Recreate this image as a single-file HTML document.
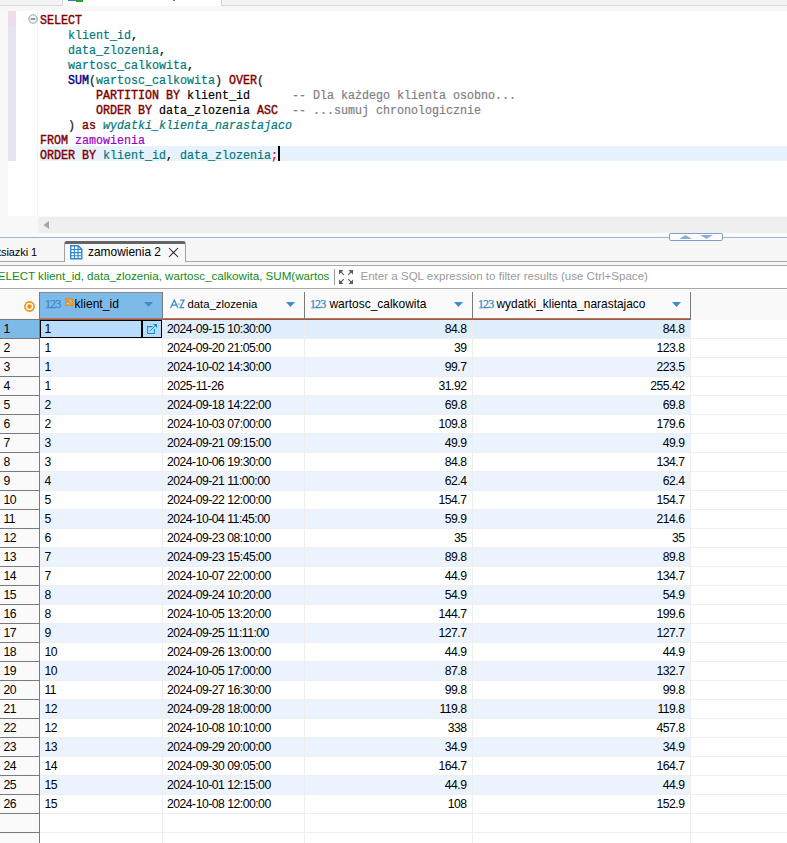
<!DOCTYPE html><html><head><meta charset="utf-8"><style>
*{margin:0;padding:0;box-sizing:border-box}
html,body{width:787px;height:843px;overflow:hidden;background:#fff;position:relative;font-family:"Liberation Sans",sans-serif}
.a{position:absolute}
.code{font-family:"Liberation Mono",monospace;font-size:12px;line-height:15px;transform:scaleX(0.9722);transform-origin:0 0;-webkit-text-stroke-width:0.2px;white-space:pre;color:#000}
.kw{color:#800000;font-weight:normal;-webkit-text-stroke-width:0.4px}
.fn{color:#000080;font-weight:normal;-webkit-text-stroke-width:0.4px}
.col{color:#007878}
.par{color:#141414}
.cm{color:#808080}
.al{color:#007878;font-style:italic}
.tb{color:#9a00c8}
.semi{color:#ff0000}
.caret{display:inline-block;width:1px;height:14px;background:#000;vertical-align:-3px}
.ui{font-size:12px;white-space:pre;line-height:19px}
.num{letter-spacing:-0.45px}
</style></head><body><div class="a" style="left:0;top:0;width:787px;height:6px;background:#f3f3f3;border-bottom:1px solid #dadada"></div>
<div class="a" style="left:62px;top:0;width:160px;height:6px;background:#fff;border-left:1px solid #d6d6d6;border-right:1px solid #d6d6d6"></div>
<div class="a" style="left:68px;top:0;width:8px;height:1px;background:#2f7fd0"></div><div class="a" style="left:76px;top:0;width:7px;height:2px;background:#2ea02e"></div>
<div class="a" style="left:173px;top:0;width:2px;height:1px;background:#8a7060"></div>
<div class="a" style="left:0;top:6px;width:787px;height:5px;background:#f7f7f7"></div>
<div class="a" style="left:0;top:11px;width:8px;height:206px;background:#f8f8f8"></div>
<div class="a" style="left:0;top:216px;width:787px;height:17px;background:#f8f8f8"></div>
<div class="a" style="left:8px;top:11px;width:8px;height:15px;background:#ecdcec"></div>
<div class="a" style="left:8px;top:26px;width:8px;height:135px;background:#e6e4f2"></div>
<div class="a" style="left:37px;top:11px;width:1px;height:205px;background:#f2f2f2"></div>
<svg class="a" style="left:27.5px;top:13.5px" width="10" height="10"><circle cx="5" cy="5" r="4.2" fill="#f4f6fa" stroke="#8a9ab8" stroke-width="1"/><line x1="2.7" y1="5" x2="7.3" y2="5" stroke="#4a5a78" stroke-width="1.2"/></svg>
<div class="a" style="left:40px;top:146px;width:747px;height:15px;background:#e8f2fe"></div>
<div class="a code" style="left:40px;top:13.5px"><b class="kw">SELECT</b>
    <span class="col">klient_id</span>,
    <span class="col">data_zlozenia</span>,
    <span class="col">wartosc_calkowita</span>,
    <b class="fn">SUM</b><span class="par">(</span><span class="col">wartosc_calkowita</span><span class="par">)</span> <b class="kw">OVER</b><span class="par">(</span>
        <b class="kw">PARTITION BY</b> klient_id      <span class="cm">-- Dla każdego klienta osobno...</span>
        <b class="kw">ORDER BY</b> data_zlozenia <b class="kw">ASC</b>  <span class="cm">-- ...sumuj chronologicznie</span>
    <span class="par">)</span> <b class="kw">as</b> <i class="al">wydatki_klienta_narastajaco</i>
<b class="kw">FROM</b> <span class="tb">zamowienia</span>
<b class="kw">ORDER BY</b> <span class="col">klient_id</span>, <span class="col">data_zlozenia</span><span class="semi">;</span></div>
<div class="a" style="left:278px;top:146px;width:2px;height:15px;background:#000"></div>
<div class="a" style="left:38px;top:217px;width:749px;height:16px;background:#efefef"></div>
<svg class="a" style="left:42px;top:220px" width="9" height="10"><path d="M7 1 L1.5 5 L7 9 Z" fill="#a6a6a6"/></svg>
<div class="a" style="left:0;top:233px;width:787px;height:4px;background:#fafafa"></div>
<div class="a" style="left:0;top:237px;width:787px;height:1px;background:#9fb6d2"></div>
<div class="a" style="left:0;top:238px;width:787px;height:28px;background:#f7f7f7"></div>
<div class="a" style="left:669px;top:233px;width:54px;height:8px;background:#fff;border:1px solid #7f9fc6;border-radius:2px"></div>
<svg class="a" style="left:678px;top:234px" width="40" height="6"><path d="M1 5 L7.5 1 L14 5 Z" fill="#8fadd2"/><path d="M22 1 L35 1 L28.5 5 Z" fill="#8fadd2"/></svg>
<div class="a" style="left:0;top:261px;width:787px;height:1px;background:#a8a8a8"></div>
<div class="a" style="left:-2px;top:245.95px;font-size:11.1px;line-height:normal;white-space:pre;color:#000;letter-spacing:-0.1px;">tsiazki 1</div>
<div class="a" style="left:64px;top:241px;width:122px;height:21px;background:#f9f9f9;border-left:1px solid #a0a0a0;border-right:1px solid #a0a0a0;border-top:3px solid #646464;border-radius:3px 3px 0 0"></div>
<svg class="a" style="left:70px;top:245px" width="13" height="15"><path d="M0.7 0.7H8.2L11.8 4.3V13.8H0.7Z" fill="#fff" stroke="#2f86d2" stroke-width="1.4"/><path d="M4.4 1V13.5M8 1V13.5M1 4.5H11.5M1 7.6H11.5M1 10.7H11.5M8.2 0.7V4.3H11.8" fill="none" stroke="#2f86d2" stroke-width="1.1"/></svg>
<div class="a" style="left:88px;top:244.69px;font-size:11.95px;line-height:normal;white-space:pre;color:#000;">zamowienia 2</div>
<svg class="a" style="left:168px;top:247px" width="11" height="11"><path d="M1 1L10 10M10 1L1 10" stroke="#1a1a1a" stroke-width="1.05"/></svg>
<div class="a" style="left:0;top:265px;width:787px;height:24px;background:#fff;border-top:1px solid #a8a8a8;border-bottom:1px solid #a8a8a8"></div>
<div class="a" style="left:0;top:266px;width:331px;height:22px;overflow:hidden"><div class="a" style="left:-10px;top:3.30px;font-size:11.6px;line-height:normal;white-space:pre;color:#148a14;">SELECT klient_id, data_zlozenia, wartosc_calkowita, SUM(wartos</div></div>
<div class="a" style="left:334px;top:269px;width:1px;height:16px;background:#9a9a9a"></div>
<svg class="a" style="left:339px;top:270px" width="15" height="14"><path d="M0 0H4.5L0 4.5ZM14 0H9.5L14 4.5ZM0 14H4.5L0 9.5ZM14 14H9.5L14 9.5Z" fill="#5a5a5a"/><path d="M1 1L4.8 4.8M13 1L9.2 4.8M1 13L4.8 9.2M13 13L9.2 9.2" stroke="#5a5a5a" stroke-width="1.1"/></svg>
<div class="a" style="left:360.5px;top:269.55px;font-size:11.55px;line-height:normal;white-space:pre;color:#9a9a9a;">Enter a SQL expression to filter results (use Ctrl+Space)</div>
<div class="a" style="left:0;top:289px;width:787px;height:554px;background:#fff"></div>
<div class="a" style="left:0;top:289px;width:787px;height:31px;background:#f9f9f9"></div>
<div class="a" style="left:0;top:292px;width:691px;height:28px;background:#fafafa"></div>
<div class="a" style="left:39px;top:292px;width:124px;height:1px;background:#8a8a8a"></div>
<div class="a" style="left:0;top:319px;width:40px;height:1px;background:#7a7a7a"></div>
<div class="a" style="left:40px;top:293px;width:122px;height:25px;background:#7dbae7"></div>
<div class="a" style="left:40px;top:318px;width:651px;height:1px;background:#f0643c"></div>
<div class="a" style="left:40px;top:319px;width:651px;height:1px;background:#6a6a6a"></div>
<div class="a" style="left:39px;top:292px;width:1px;height:28px;background:#7a7a7a"></div>
<div class="a" style="left:162px;top:292px;width:1px;height:28px;background:#7a7a7a"></div>
<div class="a" style="left:304px;top:292px;width:1px;height:28px;background:#7a7a7a"></div>
<div class="a" style="left:472px;top:292px;width:1px;height:28px;background:#7a7a7a"></div>
<div class="a" style="left:690px;top:292px;width:1px;height:28px;background:#7a7a7a"></div>
<svg class="a" style="left:21.5px;top:298.5px" width="15" height="15"><circle cx="7.5" cy="7.5" r="4.6" fill="none" stroke="#f5900a" stroke-width="1.6"/><circle cx="7.5" cy="7.5" r="2.3" fill="#f5900a"/></svg>
<div class="a" style="left:45px;top:297.14px;font-size:12px;line-height:normal;white-space:pre;color:#3a86c8;letter-spacing:-0.9px;font-family:'Liberation Serif',serif;-webkit-text-stroke:0.25px #3a86c8">123</div>
<svg class="a" style="left:65px;top:298px" width="8" height="8"><rect x="0.75" y="0.75" width="6.5" height="6.5" fill="#9cc8f0" stroke="#f68c0c" stroke-width="1.5"/><path d="M2.2 2.2L5.5 5.5M2.2 2.2H4.8M2.2 2.2V4.8" stroke="#f68c0c" stroke-width="1.3"/></svg>
<div class="a" style="left:74.5px;top:297.15px;font-size:12.1px;line-height:normal;white-space:pre;color:#000;">klient_id</div>
<svg class="a" style="left:144px;top:302px" width="10" height="6"><path d="M0 0H9L4.5 5Z" fill="#3d8bd0"/></svg>
<svg class="a" style="left:169px;top:299px" width="17" height="10"><path d="M1.6 9L5.3 1L9 9M2.9 6.2H7.7M11.2 1.2H15L11.2 8.6H15.2" fill="none" stroke="#3d8bd0" stroke-width="1.25"/><rect x="9.4" y="4.4" width="1.3" height="1.3" fill="#3d8bd0"/></svg>
<div class="a" style="left:187.5px;top:297.87px;font-size:11.3px;line-height:normal;white-space:pre;color:#000;">data_zlozenia</div>
<svg class="a" style="left:286px;top:302px" width="10" height="6"><path d="M0 0H9L4.5 5Z" fill="#3d8bd0"/></svg>
<div class="a" style="left:310px;top:297.14px;font-size:12px;line-height:normal;white-space:pre;color:#3a86c8;letter-spacing:-0.9px;font-family:'Liberation Serif',serif;-webkit-text-stroke:0.25px #3a86c8">123</div>
<div class="a" style="left:329.5px;top:297.29px;font-size:11.95px;line-height:normal;white-space:pre;color:#000;">wartosc_calkowita</div>
<svg class="a" style="left:454px;top:302px" width="10" height="6"><path d="M0 0H9L4.5 5Z" fill="#3d8bd0"/></svg>
<div class="a" style="left:478px;top:297.14px;font-size:12px;line-height:normal;white-space:pre;color:#3a86c8;letter-spacing:-0.9px;font-family:'Liberation Serif',serif;-webkit-text-stroke:0.25px #3a86c8">123</div>
<div class="a" style="left:496.5px;top:297.31px;font-size:11.92px;line-height:normal;white-space:pre;color:#000;">wydatki_klienta_narastajaco</div>
<svg class="a" style="left:672px;top:302px" width="10" height="6"><path d="M0 0H9L4.5 5Z" fill="#3d8bd0"/></svg>
<div class="a" style="left:40px;top:320px;width:650px;height:18px;background:#e1eefc"></div>
<div class="a" style="left:40px;top:338px;width:747px;height:1px;background:#efefef"></div>
<div class="a" style="left:0;top:320px;width:39px;height:18px;background:#7dbae7"></div>
<div class="a" style="left:0;top:338px;width:39px;height:1px;background:#7a7a7a"></div>
<div class="a" style="left:167px;top:321.96px;font-size:12.2px;line-height:normal;white-space:pre;color:#000;letter-spacing:-0.5px;">2024-09-15 10:30:00</div>
<div class="a" style="right:320.5px;top:321.96px;font-size:12.2px;line-height:normal;white-space:pre;color:#000;letter-spacing:-0.5px;">84.8</div>
<div class="a" style="right:102.5px;top:321.96px;font-size:12.2px;line-height:normal;white-space:pre;color:#000;letter-spacing:-0.5px;">84.8</div>
<div class="a" style="left:40px;top:357px;width:747px;height:1px;background:#efefef"></div>
<div class="a" style="left:0;top:339px;width:39px;height:18px;background:#fafafa"></div>
<div class="a" style="left:0;top:357px;width:39px;height:1px;background:#7a7a7a"></div>
<div class="a" style="left:3.5px;top:340.96px;font-size:12.2px;line-height:normal;white-space:pre;color:#000;letter-spacing:-0.5px;">2</div>
<div class="a" style="left:44.5px;top:340.96px;font-size:12.2px;line-height:normal;white-space:pre;color:#000;letter-spacing:-0.5px;">1</div>
<div class="a" style="left:167px;top:340.96px;font-size:12.2px;line-height:normal;white-space:pre;color:#000;letter-spacing:-0.5px;">2024-09-20 21:05:00</div>
<div class="a" style="right:320.5px;top:340.96px;font-size:12.2px;line-height:normal;white-space:pre;color:#000;letter-spacing:-0.5px;">39</div>
<div class="a" style="right:102.5px;top:340.96px;font-size:12.2px;line-height:normal;white-space:pre;color:#000;letter-spacing:-0.5px;">123.8</div>
<div class="a" style="left:40px;top:358px;width:650px;height:18px;background:#ebf4fe"></div>
<div class="a" style="left:40px;top:376px;width:747px;height:1px;background:#efefef"></div>
<div class="a" style="left:0;top:358px;width:39px;height:18px;background:#fafafa"></div>
<div class="a" style="left:0;top:376px;width:39px;height:1px;background:#7a7a7a"></div>
<div class="a" style="left:3.5px;top:359.96px;font-size:12.2px;line-height:normal;white-space:pre;color:#000;letter-spacing:-0.5px;">3</div>
<div class="a" style="left:44.5px;top:359.96px;font-size:12.2px;line-height:normal;white-space:pre;color:#000;letter-spacing:-0.5px;">1</div>
<div class="a" style="left:167px;top:359.96px;font-size:12.2px;line-height:normal;white-space:pre;color:#000;letter-spacing:-0.5px;">2024-10-02 14:30:00</div>
<div class="a" style="right:320.5px;top:359.96px;font-size:12.2px;line-height:normal;white-space:pre;color:#000;letter-spacing:-0.5px;">99.7</div>
<div class="a" style="right:102.5px;top:359.96px;font-size:12.2px;line-height:normal;white-space:pre;color:#000;letter-spacing:-0.5px;">223.5</div>
<div class="a" style="left:40px;top:395px;width:747px;height:1px;background:#efefef"></div>
<div class="a" style="left:0;top:377px;width:39px;height:18px;background:#fafafa"></div>
<div class="a" style="left:0;top:395px;width:39px;height:1px;background:#7a7a7a"></div>
<div class="a" style="left:3.5px;top:378.96px;font-size:12.2px;line-height:normal;white-space:pre;color:#000;letter-spacing:-0.5px;">4</div>
<div class="a" style="left:44.5px;top:378.96px;font-size:12.2px;line-height:normal;white-space:pre;color:#000;letter-spacing:-0.5px;">1</div>
<div class="a" style="left:167px;top:378.96px;font-size:12.2px;line-height:normal;white-space:pre;color:#000;letter-spacing:-0.5px;">2025-11-26</div>
<div class="a" style="right:320.5px;top:378.96px;font-size:12.2px;line-height:normal;white-space:pre;color:#000;letter-spacing:-0.5px;">31.92</div>
<div class="a" style="right:102.5px;top:378.96px;font-size:12.2px;line-height:normal;white-space:pre;color:#000;letter-spacing:-0.5px;">255.42</div>
<div class="a" style="left:40px;top:396px;width:650px;height:18px;background:#ebf4fe"></div>
<div class="a" style="left:40px;top:414px;width:747px;height:1px;background:#efefef"></div>
<div class="a" style="left:0;top:396px;width:39px;height:18px;background:#fafafa"></div>
<div class="a" style="left:0;top:414px;width:39px;height:1px;background:#7a7a7a"></div>
<div class="a" style="left:3.5px;top:397.96px;font-size:12.2px;line-height:normal;white-space:pre;color:#000;letter-spacing:-0.5px;">5</div>
<div class="a" style="left:44.5px;top:397.96px;font-size:12.2px;line-height:normal;white-space:pre;color:#000;letter-spacing:-0.5px;">2</div>
<div class="a" style="left:167px;top:397.96px;font-size:12.2px;line-height:normal;white-space:pre;color:#000;letter-spacing:-0.5px;">2024-09-18 14:22:00</div>
<div class="a" style="right:320.5px;top:397.96px;font-size:12.2px;line-height:normal;white-space:pre;color:#000;letter-spacing:-0.5px;">69.8</div>
<div class="a" style="right:102.5px;top:397.96px;font-size:12.2px;line-height:normal;white-space:pre;color:#000;letter-spacing:-0.5px;">69.8</div>
<div class="a" style="left:40px;top:433px;width:747px;height:1px;background:#efefef"></div>
<div class="a" style="left:0;top:415px;width:39px;height:18px;background:#fafafa"></div>
<div class="a" style="left:0;top:433px;width:39px;height:1px;background:#7a7a7a"></div>
<div class="a" style="left:3.5px;top:416.96px;font-size:12.2px;line-height:normal;white-space:pre;color:#000;letter-spacing:-0.5px;">6</div>
<div class="a" style="left:44.5px;top:416.96px;font-size:12.2px;line-height:normal;white-space:pre;color:#000;letter-spacing:-0.5px;">2</div>
<div class="a" style="left:167px;top:416.96px;font-size:12.2px;line-height:normal;white-space:pre;color:#000;letter-spacing:-0.5px;">2024-10-03 07:00:00</div>
<div class="a" style="right:320.5px;top:416.96px;font-size:12.2px;line-height:normal;white-space:pre;color:#000;letter-spacing:-0.5px;">109.8</div>
<div class="a" style="right:102.5px;top:416.96px;font-size:12.2px;line-height:normal;white-space:pre;color:#000;letter-spacing:-0.5px;">179.6</div>
<div class="a" style="left:40px;top:434px;width:650px;height:18px;background:#ebf4fe"></div>
<div class="a" style="left:40px;top:452px;width:747px;height:1px;background:#efefef"></div>
<div class="a" style="left:0;top:434px;width:39px;height:18px;background:#fafafa"></div>
<div class="a" style="left:0;top:452px;width:39px;height:1px;background:#7a7a7a"></div>
<div class="a" style="left:3.5px;top:435.96px;font-size:12.2px;line-height:normal;white-space:pre;color:#000;letter-spacing:-0.5px;">7</div>
<div class="a" style="left:44.5px;top:435.96px;font-size:12.2px;line-height:normal;white-space:pre;color:#000;letter-spacing:-0.5px;">3</div>
<div class="a" style="left:167px;top:435.96px;font-size:12.2px;line-height:normal;white-space:pre;color:#000;letter-spacing:-0.5px;">2024-09-21 09:15:00</div>
<div class="a" style="right:320.5px;top:435.96px;font-size:12.2px;line-height:normal;white-space:pre;color:#000;letter-spacing:-0.5px;">49.9</div>
<div class="a" style="right:102.5px;top:435.96px;font-size:12.2px;line-height:normal;white-space:pre;color:#000;letter-spacing:-0.5px;">49.9</div>
<div class="a" style="left:40px;top:471px;width:747px;height:1px;background:#efefef"></div>
<div class="a" style="left:0;top:453px;width:39px;height:18px;background:#fafafa"></div>
<div class="a" style="left:0;top:471px;width:39px;height:1px;background:#7a7a7a"></div>
<div class="a" style="left:3.5px;top:454.96px;font-size:12.2px;line-height:normal;white-space:pre;color:#000;letter-spacing:-0.5px;">8</div>
<div class="a" style="left:44.5px;top:454.96px;font-size:12.2px;line-height:normal;white-space:pre;color:#000;letter-spacing:-0.5px;">3</div>
<div class="a" style="left:167px;top:454.96px;font-size:12.2px;line-height:normal;white-space:pre;color:#000;letter-spacing:-0.5px;">2024-10-06 19:30:00</div>
<div class="a" style="right:320.5px;top:454.96px;font-size:12.2px;line-height:normal;white-space:pre;color:#000;letter-spacing:-0.5px;">84.8</div>
<div class="a" style="right:102.5px;top:454.96px;font-size:12.2px;line-height:normal;white-space:pre;color:#000;letter-spacing:-0.5px;">134.7</div>
<div class="a" style="left:40px;top:472px;width:650px;height:18px;background:#ebf4fe"></div>
<div class="a" style="left:40px;top:490px;width:747px;height:1px;background:#efefef"></div>
<div class="a" style="left:0;top:472px;width:39px;height:18px;background:#fafafa"></div>
<div class="a" style="left:0;top:490px;width:39px;height:1px;background:#7a7a7a"></div>
<div class="a" style="left:3.5px;top:473.96px;font-size:12.2px;line-height:normal;white-space:pre;color:#000;letter-spacing:-0.5px;">9</div>
<div class="a" style="left:44.5px;top:473.96px;font-size:12.2px;line-height:normal;white-space:pre;color:#000;letter-spacing:-0.5px;">4</div>
<div class="a" style="left:167px;top:473.96px;font-size:12.2px;line-height:normal;white-space:pre;color:#000;letter-spacing:-0.5px;">2024-09-21 11:00:00</div>
<div class="a" style="right:320.5px;top:473.96px;font-size:12.2px;line-height:normal;white-space:pre;color:#000;letter-spacing:-0.5px;">62.4</div>
<div class="a" style="right:102.5px;top:473.96px;font-size:12.2px;line-height:normal;white-space:pre;color:#000;letter-spacing:-0.5px;">62.4</div>
<div class="a" style="left:40px;top:509px;width:747px;height:1px;background:#efefef"></div>
<div class="a" style="left:0;top:491px;width:39px;height:18px;background:#fafafa"></div>
<div class="a" style="left:0;top:509px;width:39px;height:1px;background:#7a7a7a"></div>
<div class="a" style="left:3.5px;top:492.96px;font-size:12.2px;line-height:normal;white-space:pre;color:#000;letter-spacing:-0.5px;">10</div>
<div class="a" style="left:44.5px;top:492.96px;font-size:12.2px;line-height:normal;white-space:pre;color:#000;letter-spacing:-0.5px;">5</div>
<div class="a" style="left:167px;top:492.96px;font-size:12.2px;line-height:normal;white-space:pre;color:#000;letter-spacing:-0.5px;">2024-09-22 12:00:00</div>
<div class="a" style="right:320.5px;top:492.96px;font-size:12.2px;line-height:normal;white-space:pre;color:#000;letter-spacing:-0.5px;">154.7</div>
<div class="a" style="right:102.5px;top:492.96px;font-size:12.2px;line-height:normal;white-space:pre;color:#000;letter-spacing:-0.5px;">154.7</div>
<div class="a" style="left:40px;top:510px;width:650px;height:18px;background:#ebf4fe"></div>
<div class="a" style="left:40px;top:528px;width:747px;height:1px;background:#efefef"></div>
<div class="a" style="left:0;top:510px;width:39px;height:18px;background:#fafafa"></div>
<div class="a" style="left:0;top:528px;width:39px;height:1px;background:#7a7a7a"></div>
<div class="a" style="left:3.5px;top:511.96px;font-size:12.2px;line-height:normal;white-space:pre;color:#000;letter-spacing:-0.5px;">11</div>
<div class="a" style="left:44.5px;top:511.96px;font-size:12.2px;line-height:normal;white-space:pre;color:#000;letter-spacing:-0.5px;">5</div>
<div class="a" style="left:167px;top:511.96px;font-size:12.2px;line-height:normal;white-space:pre;color:#000;letter-spacing:-0.5px;">2024-10-04 11:45:00</div>
<div class="a" style="right:320.5px;top:511.96px;font-size:12.2px;line-height:normal;white-space:pre;color:#000;letter-spacing:-0.5px;">59.9</div>
<div class="a" style="right:102.5px;top:511.96px;font-size:12.2px;line-height:normal;white-space:pre;color:#000;letter-spacing:-0.5px;">214.6</div>
<div class="a" style="left:40px;top:547px;width:747px;height:1px;background:#efefef"></div>
<div class="a" style="left:0;top:529px;width:39px;height:18px;background:#fafafa"></div>
<div class="a" style="left:0;top:547px;width:39px;height:1px;background:#7a7a7a"></div>
<div class="a" style="left:3.5px;top:530.96px;font-size:12.2px;line-height:normal;white-space:pre;color:#000;letter-spacing:-0.5px;">12</div>
<div class="a" style="left:44.5px;top:530.96px;font-size:12.2px;line-height:normal;white-space:pre;color:#000;letter-spacing:-0.5px;">6</div>
<div class="a" style="left:167px;top:530.96px;font-size:12.2px;line-height:normal;white-space:pre;color:#000;letter-spacing:-0.5px;">2024-09-23 08:10:00</div>
<div class="a" style="right:320.5px;top:530.96px;font-size:12.2px;line-height:normal;white-space:pre;color:#000;letter-spacing:-0.5px;">35</div>
<div class="a" style="right:102.5px;top:530.96px;font-size:12.2px;line-height:normal;white-space:pre;color:#000;letter-spacing:-0.5px;">35</div>
<div class="a" style="left:40px;top:548px;width:650px;height:18px;background:#ebf4fe"></div>
<div class="a" style="left:40px;top:566px;width:747px;height:1px;background:#efefef"></div>
<div class="a" style="left:0;top:548px;width:39px;height:18px;background:#fafafa"></div>
<div class="a" style="left:0;top:566px;width:39px;height:1px;background:#7a7a7a"></div>
<div class="a" style="left:3.5px;top:549.96px;font-size:12.2px;line-height:normal;white-space:pre;color:#000;letter-spacing:-0.5px;">13</div>
<div class="a" style="left:44.5px;top:549.96px;font-size:12.2px;line-height:normal;white-space:pre;color:#000;letter-spacing:-0.5px;">7</div>
<div class="a" style="left:167px;top:549.96px;font-size:12.2px;line-height:normal;white-space:pre;color:#000;letter-spacing:-0.5px;">2024-09-23 15:45:00</div>
<div class="a" style="right:320.5px;top:549.96px;font-size:12.2px;line-height:normal;white-space:pre;color:#000;letter-spacing:-0.5px;">89.8</div>
<div class="a" style="right:102.5px;top:549.96px;font-size:12.2px;line-height:normal;white-space:pre;color:#000;letter-spacing:-0.5px;">89.8</div>
<div class="a" style="left:40px;top:585px;width:747px;height:1px;background:#efefef"></div>
<div class="a" style="left:0;top:567px;width:39px;height:18px;background:#fafafa"></div>
<div class="a" style="left:0;top:585px;width:39px;height:1px;background:#7a7a7a"></div>
<div class="a" style="left:3.5px;top:568.96px;font-size:12.2px;line-height:normal;white-space:pre;color:#000;letter-spacing:-0.5px;">14</div>
<div class="a" style="left:44.5px;top:568.96px;font-size:12.2px;line-height:normal;white-space:pre;color:#000;letter-spacing:-0.5px;">7</div>
<div class="a" style="left:167px;top:568.96px;font-size:12.2px;line-height:normal;white-space:pre;color:#000;letter-spacing:-0.5px;">2024-10-07 22:00:00</div>
<div class="a" style="right:320.5px;top:568.96px;font-size:12.2px;line-height:normal;white-space:pre;color:#000;letter-spacing:-0.5px;">44.9</div>
<div class="a" style="right:102.5px;top:568.96px;font-size:12.2px;line-height:normal;white-space:pre;color:#000;letter-spacing:-0.5px;">134.7</div>
<div class="a" style="left:40px;top:586px;width:650px;height:18px;background:#ebf4fe"></div>
<div class="a" style="left:40px;top:604px;width:747px;height:1px;background:#efefef"></div>
<div class="a" style="left:0;top:586px;width:39px;height:18px;background:#fafafa"></div>
<div class="a" style="left:0;top:604px;width:39px;height:1px;background:#7a7a7a"></div>
<div class="a" style="left:3.5px;top:587.96px;font-size:12.2px;line-height:normal;white-space:pre;color:#000;letter-spacing:-0.5px;">15</div>
<div class="a" style="left:44.5px;top:587.96px;font-size:12.2px;line-height:normal;white-space:pre;color:#000;letter-spacing:-0.5px;">8</div>
<div class="a" style="left:167px;top:587.96px;font-size:12.2px;line-height:normal;white-space:pre;color:#000;letter-spacing:-0.5px;">2024-09-24 10:20:00</div>
<div class="a" style="right:320.5px;top:587.96px;font-size:12.2px;line-height:normal;white-space:pre;color:#000;letter-spacing:-0.5px;">54.9</div>
<div class="a" style="right:102.5px;top:587.96px;font-size:12.2px;line-height:normal;white-space:pre;color:#000;letter-spacing:-0.5px;">54.9</div>
<div class="a" style="left:40px;top:623px;width:747px;height:1px;background:#efefef"></div>
<div class="a" style="left:0;top:605px;width:39px;height:18px;background:#fafafa"></div>
<div class="a" style="left:0;top:623px;width:39px;height:1px;background:#7a7a7a"></div>
<div class="a" style="left:3.5px;top:606.96px;font-size:12.2px;line-height:normal;white-space:pre;color:#000;letter-spacing:-0.5px;">16</div>
<div class="a" style="left:44.5px;top:606.96px;font-size:12.2px;line-height:normal;white-space:pre;color:#000;letter-spacing:-0.5px;">8</div>
<div class="a" style="left:167px;top:606.96px;font-size:12.2px;line-height:normal;white-space:pre;color:#000;letter-spacing:-0.5px;">2024-10-05 13:20:00</div>
<div class="a" style="right:320.5px;top:606.96px;font-size:12.2px;line-height:normal;white-space:pre;color:#000;letter-spacing:-0.5px;">144.7</div>
<div class="a" style="right:102.5px;top:606.96px;font-size:12.2px;line-height:normal;white-space:pre;color:#000;letter-spacing:-0.5px;">199.6</div>
<div class="a" style="left:40px;top:624px;width:650px;height:18px;background:#ebf4fe"></div>
<div class="a" style="left:40px;top:642px;width:747px;height:1px;background:#efefef"></div>
<div class="a" style="left:0;top:624px;width:39px;height:18px;background:#fafafa"></div>
<div class="a" style="left:0;top:642px;width:39px;height:1px;background:#7a7a7a"></div>
<div class="a" style="left:3.5px;top:625.96px;font-size:12.2px;line-height:normal;white-space:pre;color:#000;letter-spacing:-0.5px;">17</div>
<div class="a" style="left:44.5px;top:625.96px;font-size:12.2px;line-height:normal;white-space:pre;color:#000;letter-spacing:-0.5px;">9</div>
<div class="a" style="left:167px;top:625.96px;font-size:12.2px;line-height:normal;white-space:pre;color:#000;letter-spacing:-0.5px;">2024-09-25 11:11:00</div>
<div class="a" style="right:320.5px;top:625.96px;font-size:12.2px;line-height:normal;white-space:pre;color:#000;letter-spacing:-0.5px;">127.7</div>
<div class="a" style="right:102.5px;top:625.96px;font-size:12.2px;line-height:normal;white-space:pre;color:#000;letter-spacing:-0.5px;">127.7</div>
<div class="a" style="left:40px;top:661px;width:747px;height:1px;background:#efefef"></div>
<div class="a" style="left:0;top:643px;width:39px;height:18px;background:#fafafa"></div>
<div class="a" style="left:0;top:661px;width:39px;height:1px;background:#7a7a7a"></div>
<div class="a" style="left:3.5px;top:644.96px;font-size:12.2px;line-height:normal;white-space:pre;color:#000;letter-spacing:-0.5px;">18</div>
<div class="a" style="left:44.5px;top:644.96px;font-size:12.2px;line-height:normal;white-space:pre;color:#000;letter-spacing:-0.5px;">10</div>
<div class="a" style="left:167px;top:644.96px;font-size:12.2px;line-height:normal;white-space:pre;color:#000;letter-spacing:-0.5px;">2024-09-26 13:00:00</div>
<div class="a" style="right:320.5px;top:644.96px;font-size:12.2px;line-height:normal;white-space:pre;color:#000;letter-spacing:-0.5px;">44.9</div>
<div class="a" style="right:102.5px;top:644.96px;font-size:12.2px;line-height:normal;white-space:pre;color:#000;letter-spacing:-0.5px;">44.9</div>
<div class="a" style="left:40px;top:662px;width:650px;height:18px;background:#ebf4fe"></div>
<div class="a" style="left:40px;top:680px;width:747px;height:1px;background:#efefef"></div>
<div class="a" style="left:0;top:662px;width:39px;height:18px;background:#fafafa"></div>
<div class="a" style="left:0;top:680px;width:39px;height:1px;background:#7a7a7a"></div>
<div class="a" style="left:3.5px;top:663.96px;font-size:12.2px;line-height:normal;white-space:pre;color:#000;letter-spacing:-0.5px;">19</div>
<div class="a" style="left:44.5px;top:663.96px;font-size:12.2px;line-height:normal;white-space:pre;color:#000;letter-spacing:-0.5px;">10</div>
<div class="a" style="left:167px;top:663.96px;font-size:12.2px;line-height:normal;white-space:pre;color:#000;letter-spacing:-0.5px;">2024-10-05 17:00:00</div>
<div class="a" style="right:320.5px;top:663.96px;font-size:12.2px;line-height:normal;white-space:pre;color:#000;letter-spacing:-0.5px;">87.8</div>
<div class="a" style="right:102.5px;top:663.96px;font-size:12.2px;line-height:normal;white-space:pre;color:#000;letter-spacing:-0.5px;">132.7</div>
<div class="a" style="left:40px;top:699px;width:747px;height:1px;background:#efefef"></div>
<div class="a" style="left:0;top:681px;width:39px;height:18px;background:#fafafa"></div>
<div class="a" style="left:0;top:699px;width:39px;height:1px;background:#7a7a7a"></div>
<div class="a" style="left:3.5px;top:682.96px;font-size:12.2px;line-height:normal;white-space:pre;color:#000;letter-spacing:-0.5px;">20</div>
<div class="a" style="left:44.5px;top:682.96px;font-size:12.2px;line-height:normal;white-space:pre;color:#000;letter-spacing:-0.5px;">11</div>
<div class="a" style="left:167px;top:682.96px;font-size:12.2px;line-height:normal;white-space:pre;color:#000;letter-spacing:-0.5px;">2024-09-27 16:30:00</div>
<div class="a" style="right:320.5px;top:682.96px;font-size:12.2px;line-height:normal;white-space:pre;color:#000;letter-spacing:-0.5px;">99.8</div>
<div class="a" style="right:102.5px;top:682.96px;font-size:12.2px;line-height:normal;white-space:pre;color:#000;letter-spacing:-0.5px;">99.8</div>
<div class="a" style="left:40px;top:700px;width:650px;height:18px;background:#ebf4fe"></div>
<div class="a" style="left:40px;top:718px;width:747px;height:1px;background:#efefef"></div>
<div class="a" style="left:0;top:700px;width:39px;height:18px;background:#fafafa"></div>
<div class="a" style="left:0;top:718px;width:39px;height:1px;background:#7a7a7a"></div>
<div class="a" style="left:3.5px;top:701.96px;font-size:12.2px;line-height:normal;white-space:pre;color:#000;letter-spacing:-0.5px;">21</div>
<div class="a" style="left:44.5px;top:701.96px;font-size:12.2px;line-height:normal;white-space:pre;color:#000;letter-spacing:-0.5px;">12</div>
<div class="a" style="left:167px;top:701.96px;font-size:12.2px;line-height:normal;white-space:pre;color:#000;letter-spacing:-0.5px;">2024-09-28 18:00:00</div>
<div class="a" style="right:320.5px;top:701.96px;font-size:12.2px;line-height:normal;white-space:pre;color:#000;letter-spacing:-0.5px;">119.8</div>
<div class="a" style="right:102.5px;top:701.96px;font-size:12.2px;line-height:normal;white-space:pre;color:#000;letter-spacing:-0.5px;">119.8</div>
<div class="a" style="left:40px;top:737px;width:747px;height:1px;background:#efefef"></div>
<div class="a" style="left:0;top:719px;width:39px;height:18px;background:#fafafa"></div>
<div class="a" style="left:0;top:737px;width:39px;height:1px;background:#7a7a7a"></div>
<div class="a" style="left:3.5px;top:720.96px;font-size:12.2px;line-height:normal;white-space:pre;color:#000;letter-spacing:-0.5px;">22</div>
<div class="a" style="left:44.5px;top:720.96px;font-size:12.2px;line-height:normal;white-space:pre;color:#000;letter-spacing:-0.5px;">12</div>
<div class="a" style="left:167px;top:720.96px;font-size:12.2px;line-height:normal;white-space:pre;color:#000;letter-spacing:-0.5px;">2024-10-08 10:10:00</div>
<div class="a" style="right:320.5px;top:720.96px;font-size:12.2px;line-height:normal;white-space:pre;color:#000;letter-spacing:-0.5px;">338</div>
<div class="a" style="right:102.5px;top:720.96px;font-size:12.2px;line-height:normal;white-space:pre;color:#000;letter-spacing:-0.5px;">457.8</div>
<div class="a" style="left:40px;top:738px;width:650px;height:18px;background:#ebf4fe"></div>
<div class="a" style="left:40px;top:756px;width:747px;height:1px;background:#efefef"></div>
<div class="a" style="left:0;top:738px;width:39px;height:18px;background:#fafafa"></div>
<div class="a" style="left:0;top:756px;width:39px;height:1px;background:#7a7a7a"></div>
<div class="a" style="left:3.5px;top:739.96px;font-size:12.2px;line-height:normal;white-space:pre;color:#000;letter-spacing:-0.5px;">23</div>
<div class="a" style="left:44.5px;top:739.96px;font-size:12.2px;line-height:normal;white-space:pre;color:#000;letter-spacing:-0.5px;">13</div>
<div class="a" style="left:167px;top:739.96px;font-size:12.2px;line-height:normal;white-space:pre;color:#000;letter-spacing:-0.5px;">2024-09-29 20:00:00</div>
<div class="a" style="right:320.5px;top:739.96px;font-size:12.2px;line-height:normal;white-space:pre;color:#000;letter-spacing:-0.5px;">34.9</div>
<div class="a" style="right:102.5px;top:739.96px;font-size:12.2px;line-height:normal;white-space:pre;color:#000;letter-spacing:-0.5px;">34.9</div>
<div class="a" style="left:40px;top:775px;width:747px;height:1px;background:#efefef"></div>
<div class="a" style="left:0;top:757px;width:39px;height:18px;background:#fafafa"></div>
<div class="a" style="left:0;top:775px;width:39px;height:1px;background:#7a7a7a"></div>
<div class="a" style="left:3.5px;top:758.96px;font-size:12.2px;line-height:normal;white-space:pre;color:#000;letter-spacing:-0.5px;">24</div>
<div class="a" style="left:44.5px;top:758.96px;font-size:12.2px;line-height:normal;white-space:pre;color:#000;letter-spacing:-0.5px;">14</div>
<div class="a" style="left:167px;top:758.96px;font-size:12.2px;line-height:normal;white-space:pre;color:#000;letter-spacing:-0.5px;">2024-09-30 09:05:00</div>
<div class="a" style="right:320.5px;top:758.96px;font-size:12.2px;line-height:normal;white-space:pre;color:#000;letter-spacing:-0.5px;">164.7</div>
<div class="a" style="right:102.5px;top:758.96px;font-size:12.2px;line-height:normal;white-space:pre;color:#000;letter-spacing:-0.5px;">164.7</div>
<div class="a" style="left:40px;top:776px;width:650px;height:18px;background:#ebf4fe"></div>
<div class="a" style="left:40px;top:794px;width:747px;height:1px;background:#efefef"></div>
<div class="a" style="left:0;top:776px;width:39px;height:18px;background:#fafafa"></div>
<div class="a" style="left:0;top:794px;width:39px;height:1px;background:#7a7a7a"></div>
<div class="a" style="left:3.5px;top:777.96px;font-size:12.2px;line-height:normal;white-space:pre;color:#000;letter-spacing:-0.5px;">25</div>
<div class="a" style="left:44.5px;top:777.96px;font-size:12.2px;line-height:normal;white-space:pre;color:#000;letter-spacing:-0.5px;">15</div>
<div class="a" style="left:167px;top:777.96px;font-size:12.2px;line-height:normal;white-space:pre;color:#000;letter-spacing:-0.5px;">2024-10-01 12:15:00</div>
<div class="a" style="right:320.5px;top:777.96px;font-size:12.2px;line-height:normal;white-space:pre;color:#000;letter-spacing:-0.5px;">44.9</div>
<div class="a" style="right:102.5px;top:777.96px;font-size:12.2px;line-height:normal;white-space:pre;color:#000;letter-spacing:-0.5px;">44.9</div>
<div class="a" style="left:40px;top:813px;width:747px;height:1px;background:#efefef"></div>
<div class="a" style="left:0;top:795px;width:39px;height:18px;background:#fafafa"></div>
<div class="a" style="left:0;top:813px;width:39px;height:1px;background:#7a7a7a"></div>
<div class="a" style="left:3.5px;top:796.96px;font-size:12.2px;line-height:normal;white-space:pre;color:#000;letter-spacing:-0.5px;">26</div>
<div class="a" style="left:44.5px;top:796.96px;font-size:12.2px;line-height:normal;white-space:pre;color:#000;letter-spacing:-0.5px;">15</div>
<div class="a" style="left:167px;top:796.96px;font-size:12.2px;line-height:normal;white-space:pre;color:#000;letter-spacing:-0.5px;">2024-10-08 12:00:00</div>
<div class="a" style="right:320.5px;top:796.96px;font-size:12.2px;line-height:normal;white-space:pre;color:#000;letter-spacing:-0.5px;">108</div>
<div class="a" style="right:102.5px;top:796.96px;font-size:12.2px;line-height:normal;white-space:pre;color:#000;letter-spacing:-0.5px;">152.9</div>
<div class="a" style="left:0;top:814px;width:39px;height:18px;background:#fafafa"></div>
<div class="a" style="left:0;top:832px;width:39px;height:1px;background:#7a7a7a"></div>
<div class="a" style="left:40px;top:832px;width:747px;height:1px;background:#efefef"></div>
<div class="a" style="left:0;top:833px;width:39px;height:18px;background:#fafafa"></div>
<div class="a" style="left:0;top:851px;width:39px;height:1px;background:#7a7a7a"></div>
<div class="a" style="left:40px;top:851px;width:747px;height:1px;background:#efefef"></div>
<div class="a" style="left:39px;top:320px;width:1px;height:523px;background:#7a7a7a"></div>
<div class="a" style="left:162px;top:320px;width:1px;height:523px;background:#eeeeee"></div>
<div class="a" style="left:304px;top:320px;width:1px;height:523px;background:#eeeeee"></div>
<div class="a" style="left:472px;top:320px;width:1px;height:523px;background:#eeeeee"></div>
<div class="a" style="left:690px;top:320px;width:1px;height:523px;background:#eeeeee"></div>
<div class="a" style="left:40px;top:320px;width:122px;height:18px;background:#b9dcfc;border:1px solid #000;border-left-width:1.5px"></div>
<div class="a" style="left:141px;top:320px;width:1.6px;height:18px;background:#000"></div>
<div class="a" style="left:44.5px;top:321.96px;font-size:12.2px;line-height:normal;white-space:pre;color:#000;letter-spacing:-0.5px;">1</div>
<div class="a" style="left:3.5px;top:321.96px;font-size:12.2px;line-height:normal;white-space:pre;color:#000;letter-spacing:-0.5px;">1</div>
<svg class="a" style="left:146px;top:323px" width="13" height="13"><path d="M6.5 3.6H1.6V10.4H8.4V6" fill="none" stroke="#0b8ed6" stroke-width="1.05"/><path d="M3.8 8.2L9.3 2.7" stroke="#0b8ed6" stroke-width="0.9"/><path d="M7 1H11V5Z" fill="#0b8ed6"/></svg></body></html>
